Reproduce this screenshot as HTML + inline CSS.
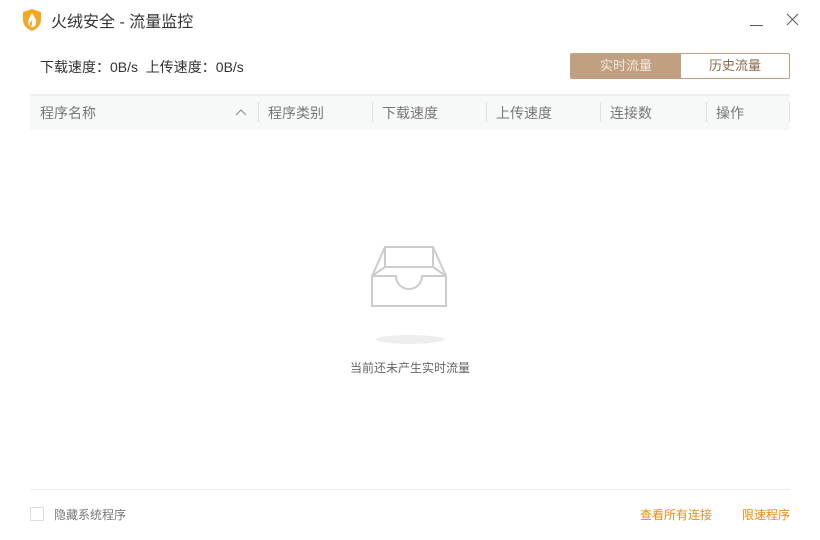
<!DOCTYPE html><html><head><meta charset="utf-8"><style>
body{margin:0;width:820px;height:540px;background:#fff;font-family:"Liberation Sans","Noto Sans CJK SC",sans-serif;position:relative;overflow:hidden}
.a{position:absolute;white-space:nowrap}
.h{position:absolute;top:94px;left:30px;width:760px;height:36px;background:#f7f8f8;border-top:2px solid #efefef;box-sizing:border-box}
.c{position:absolute;top:103px;font-size:14px;color:#777}
.s{position:absolute;top:102px;width:1px;height:20px;background:#e0e0e0}
</style></head><body>
<svg class="a" style="left:22px;top:9px" width="20" height="22" viewBox="0 0 20 22"><path d="M1 3L10 0L19 3V11C19 16 15 20 10 22C5 20 1 16 1 11Z" fill="#f5a623"/><path d="M10 4C12 8 15 10 14 15C13 18 10 19 8 18C11 16 10 13 10 11C9 13 7 14 8 17C5 15 6 10 10 4Z" fill="#fff"/></svg>
<div class="a" style="left:51px;top:8px;font-size:16px;color:#333">火绒安全 - 流量监控</div>
<div class="a" style="left:750px;top:25px;width:13px;height:1px;background:#555"></div>
<svg class="a" style="left:786px;top:13px" width="13" height="13"><path d="M1 1L12 12M12 1L1 12" stroke="#666" stroke-width="1.2"/></svg>
<div class="a" style="left:40px;top:57px;font-size:14px;color:#333">下载速度：0B/s&nbsp; 上传速度：0B/s</div>
<div class="a" style="left:570px;top:53px;width:220px;height:26px;border:1px solid #c0a080;box-sizing:border-box;border-radius:2px;overflow:hidden">
<div style="position:absolute;left:0;top:0;width:110px;height:24px;background:#c0a080;color:#f3e8dc;font-size:13px;text-align:center;line-height:24px">实时流量</div>
<div style="position:absolute;left:110px;top:0;width:108px;height:24px;color:#8a6a4a;font-size:13px;text-align:center;line-height:24px">历史流量</div></div>
<div class="h"></div>
<div class="c" style="left:40px">程序名称</div>
<svg class="a" style="left:235px;top:108px" width="12" height="8"><path d="M1 7L6 2L11 7" stroke="#888" fill="none"/></svg>
<div class="s" style="left:258px"></div><div class="c" style="left:268px">程序类别</div>
<div class="s" style="left:372px"></div><div class="c" style="left:382px">下载速度</div>
<div class="s" style="left:486px"></div><div class="c" style="left:496px">上传速度</div>
<div class="s" style="left:600px"></div><div class="c" style="left:610px">连接数</div>
<div class="s" style="left:706px"></div><div class="c" style="left:716px">操作</div>
<div class="s" style="left:789px"></div>
<svg class="a" style="left:370px;top:245px" width="80" height="64"><g stroke="#ccc" stroke-width="2" fill="none"><path d="M15 2H63V22H15Z"/><path d="M15 2L2 31M63 2L76 31M15 22L2 31M63 22L76 31"/><path d="M2 31H26A13 13 0 0 0 52 31H76V61H2Z"/></g></svg>
<div class="a" style="left:376px;top:335px;width:68px;height:9px;border-radius:50%;background:#eee"></div>
<div class="a" style="left:350px;top:359px;font-size:12px;color:#666">当前还未产生实时流量</div>
<div class="a" style="left:30px;top:489px;width:760px;height:1px;background:#eee"></div>
<div class="a" style="left:30px;top:507px;width:14px;height:14px;border:1px solid #ddd;box-sizing:border-box"></div>
<div class="a" style="left:54px;top:506px;font-size:12px;color:#777">隐藏系统程序</div>
<div class="a" style="left:640px;top:506px;font-size:12px;color:#f08a10">查看所有连接</div>
<div class="a" style="left:742px;top:506px;font-size:12px;color:#f08a10">限速程序</div>
</body></html>
